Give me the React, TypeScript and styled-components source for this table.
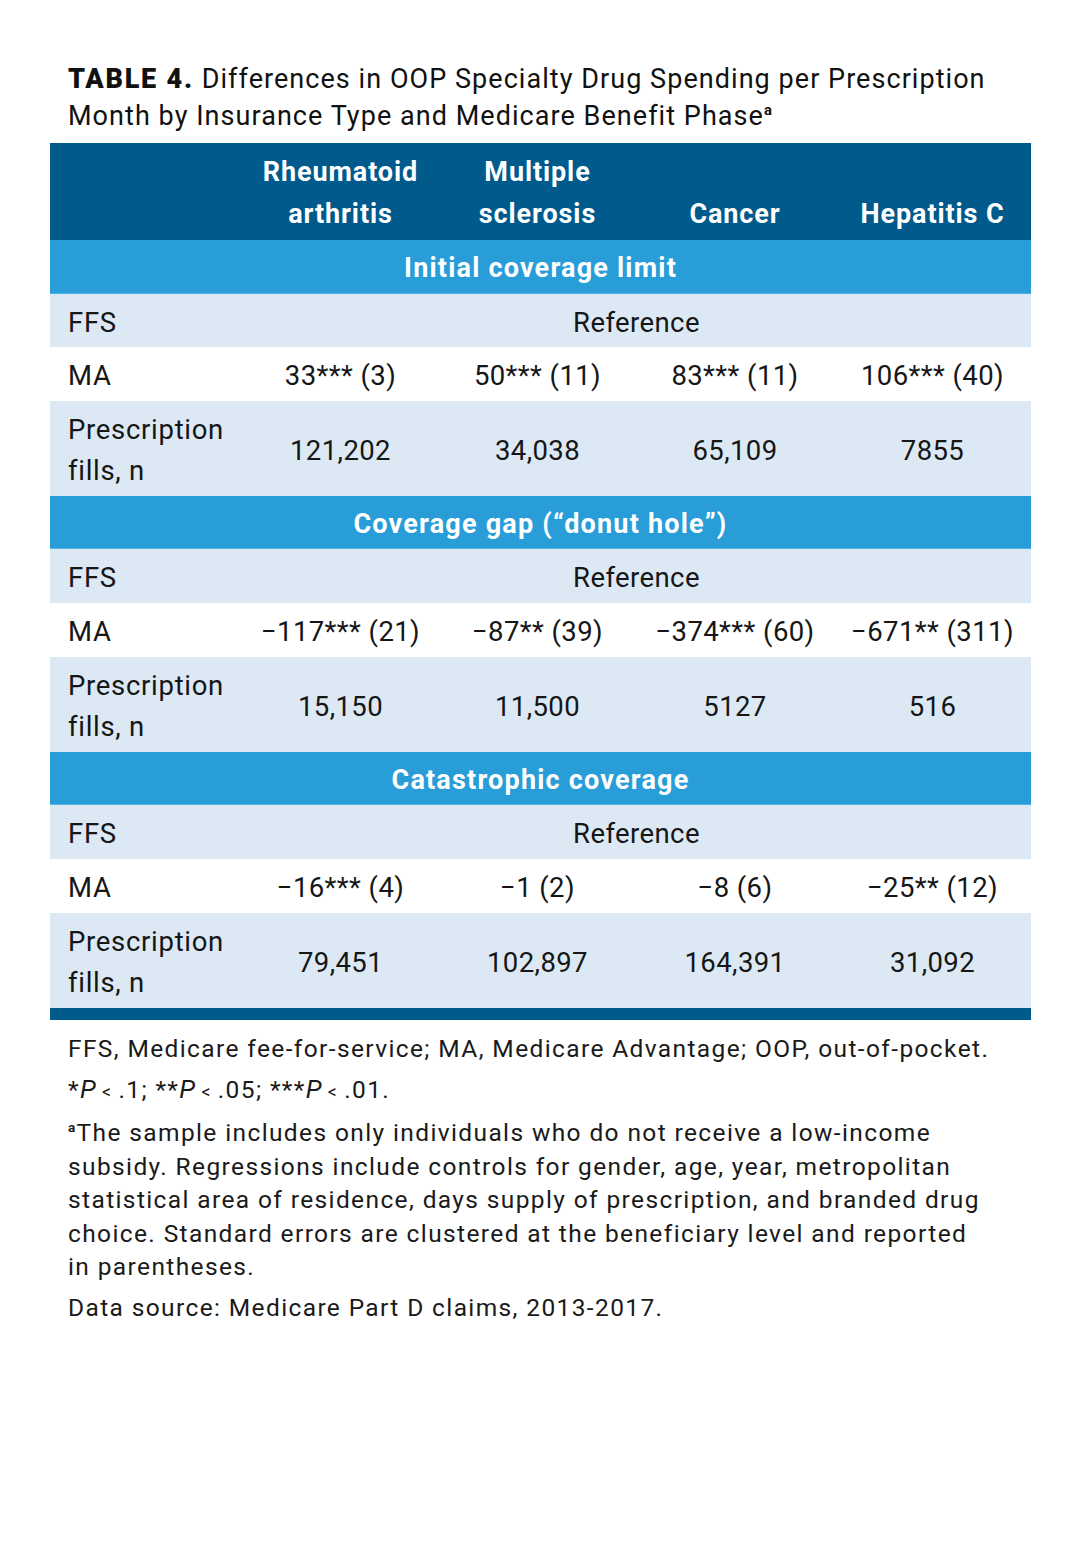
import React from "react";
import styled, { createGlobalStyle } from "styled-components";

const Global = createGlobalStyle`
  html, body { margin: 0; padding: 0; background: #ffffff; }
  body { font-family: "Roboto", "Noto Sans", sans-serif; color: #1a1a1a; }
`;

const Page = styled.div`
  width: 1081px;
  min-height: 1551px;
  box-sizing: border-box;
  padding: 61px 50px 0 50px;
`;

const Title = styled.h1`
  margin: 0 0 8px 18px;
  font-size: 27px;
  font-weight: 400;
  line-height: 37px;
  letter-spacing: 1.05px;
  color: #111;
`;

const TitleLabel = styled.span`
  font-weight: 900;
  letter-spacing: 1.8px;
`;

const Sup = styled.sup`
  font-size: 0.55em;
  font-weight: 700;
  vertical-align: super;
  line-height: 0;
`;

const Table = styled.table`
  width: 981px;
  border-collapse: collapse;
  border-spacing: 0;
  table-layout: fixed;
`;

const HeadRow = styled.tr`
  background: #005a8c;
  height: 97px;
`;

const HeadCell = styled.th`
  padding: 0 0 5px 0;
  vertical-align: bottom;
  text-align: center;
  color: #ffffff;
  font-size: 27px;
  font-weight: 700;
  line-height: 42px;
  letter-spacing: 0.9px;
`;

const SectionRow = styled.tr<{ $h: number }>`
  background: #289dd8;
  height: ${(p) => p.$h}px;
`;

const SectionCell = styled.td`
  padding: 2px 0 0 0;
  text-align: center;
  color: #ffffff;
  font-size: 27px;
  font-weight: 700;
  letter-spacing: 1.2px;
  box-shadow: inset 0 -1px 0 #4fb0e2;
`;

const Row = styled.tr<{ $shade: boolean; $h: number }>`
  background: ${(p) => (p.$shade ? "#dce9f5" : "#ffffff")};
  height: ${(p) => p.$h}px;
`;

const Label = styled.td`
  padding: 3px 0 0 18px;
  font-size: 27.5px;
  line-height: 41px;
  letter-spacing: 0.7px;
  color: #161616;
  vertical-align: middle;
`;

const Value = styled.td`
  padding: 3px 0 0 0;
  text-align: center;
  font-size: 27.5px;
  line-height: 41px;
  letter-spacing: 0.4px;
  color: #161616;
  white-space: nowrap;
  vertical-align: middle;
`;

const BottomRule = styled.div`
  width: 981px;
  height: 12px;
  background: #005a8c;
`;

const Notes = styled.div`
  padding: 12px 0 0 18px;
  display: flex;
  flex-direction: column;
  gap: 7px;
`;

const Note = styled.p`
  margin: 0;
  font-size: 24.5px;
  line-height: 33.5px;
  letter-spacing: 1.38px;
  color: #1a1a1a;
`;

const Ital = styled.i`
  font-style: italic;
  font-size: 1.05em;
`;

const Lt = styled.span`
  font-size: 0.72em;
  margin: 0 6px 0 5px;
`;

type Section = {
  title: string;
  ma: string[];
  fills: string[];
  h: number;
};

const sections: Section[] = [
  {
    title: "Initial coverage limit",
    ma: ["33*** (3)", "50*** (11)", "83*** (11)", "106*** (40)"],
    fills: ["121,202", "34,038", "65,109", "7855"],
    h: 54,
  },
  {
    title: "Coverage gap (“donut hole”)",
    ma: ["−117*** (21)", "−87** (39)", "−374*** (60)", "−671** (311)"],
    fills: ["15,150", "11,500", "5127", "516"],
    h: 53,
  },
  {
    title: "Catastrophic coverage",
    ma: ["−16*** (4)", "−1 (2)", "−8 (6)", "−25** (12)"],
    fills: ["79,451", "102,897", "164,391", "31,092"],
    h: 53,
  },
];

export default function App() {
  return (
    <Page>
      <Global />
      <Title>
        <TitleLabel>TABLE 4.</TitleLabel> Differences in OOP Specialty Drug Spending per Prescription
        <br />
        Month by Insurance Type and Medicare Benefit Phase<Sup>a</Sup>
      </Title>
      <Table>
        <colgroup>
          <col style={{ width: "192px" }} />
          <col style={{ width: "197px" }} />
          <col style={{ width: "197px" }} />
          <col style={{ width: "198px" }} />
          <col style={{ width: "197px" }} />
        </colgroup>
        <thead>
          <HeadRow>
            <HeadCell />
            <HeadCell>
              Rheumatoid
              <br />
              arthritis
            </HeadCell>
            <HeadCell>
              Multiple
              <br />
              sclerosis
            </HeadCell>
            <HeadCell>Cancer</HeadCell>
            <HeadCell>Hepatitis C</HeadCell>
          </HeadRow>
        </thead>
        {sections.map((s) => (
          <tbody key={s.title}>
            <SectionRow $h={s.h}>
              <SectionCell colSpan={5}>{s.title}</SectionCell>
            </SectionRow>
            <Row $shade $h={s.h === 54 ? 53 : 54}>
              <Label>FFS</Label>
              <Value colSpan={4}>Reference</Value>
            </Row>
            <Row $shade={false} $h={54}>
              <Label>MA</Label>
              {s.ma.map((v, i) => (
                <Value key={i}>{v}</Value>
              ))}
            </Row>
            <Row $shade $h={95}>
              <Label>
                Prescription
                <br />
                fills, n
              </Label>
              {s.fills.map((v, i) => (
                <Value key={i}>{v}</Value>
              ))}
            </Row>
          </tbody>
        ))}
      </Table>
      <BottomRule />
      <Notes>
        <Note>FFS, Medicare fee-for-service; MA, Medicare Advantage; OOP, out-of-pocket.</Note>
        <Note>
          *<Ital>P</Ital>
          <Lt>&lt;</Lt>.1; **<Ital>P</Ital>
          <Lt>&lt;</Lt>.05; ***<Ital>P</Ital>
          <Lt>&lt;</Lt>.01.
        </Note>
        <Note>
          <Sup>a</Sup>The sample includes only individuals who do not receive a low-income
          <br />
          subsidy. Regressions include controls for gender, age, year, metropolitan
          <br />
          statistical area of residence, days supply of prescription, and branded drug
          <br />
          choice. Standard errors are clustered at the beneficiary level and reported
          <br />
          in parentheses.
        </Note>
        <Note>Data source: Medicare Part D claims, 2013-2017.</Note>
      </Notes>
    </Page>
  );
}
